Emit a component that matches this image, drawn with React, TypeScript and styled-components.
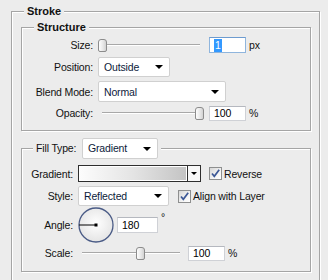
import React from "react";
import styled, { createGlobalStyle } from "styled-components";

const GlobalStyle = createGlobalStyle`
  html, body {
    margin: 0;
    padding: 0;
    background: #ececec;
  }
  body {
    font-family: "Liberation Sans", Arial, sans-serif;
    font-size: 10.5px;
    letter-spacing: -0.15px;
    color: #111;
  }
`;

const Page = styled.div`
  width: 328px;
  height: 280px;
  overflow: hidden;
  box-sizing: border-box;
  padding: 5px 0 0 11px;
`;

const Group = styled.fieldset<{ $width: number; $height?: number }>`
  box-sizing: border-box;
  width: ${(p) => p.$width}px;
  ${(p) => (p.$height ? `height: ${p.$height}px;` : "")}
  min-width: 0;
  margin: 0;
  padding: 0;
  border: 1px solid #a5a5a5;
  box-shadow: 1px 1px 0 #fff, inset 1px 1px 0 #fff;
`;

const Legend = styled.legend<{ $offset?: number }>`
  margin-left: ${(p) => p.$offset ?? 12}px;
  padding: 0 3px;
  line-height: 13px;
  font-size: 11px;
  font-weight: bold;
  letter-spacing: 0;
  background: #ececec;
`;

const OuterBody = styled.div`
  padding: 3px 0 0 9px;
`;

const GroupBody = styled.div<{ $top: number; $bottom: number }>`
  padding: ${(p) => p.$top}px 0 ${(p) => p.$bottom}px 1px;
`;

const Row = styled.div<{ $height: number; $gap?: number }>`
  display: flex;
  align-items: center;
  height: ${(p) => p.$height}px;
  margin-top: ${(p) => p.$gap ?? 0}px;
`;

const Label = styled.span<{ $width: number }>`
  width: ${(p) => p.$width}px;
  margin-right: 5px;
  text-align: right;
  white-space: nowrap;
`;

const LegendRow = styled.div`
  display: flex;
  align-items: center;
  font-size: 10.5px;
  font-weight: normal;
  letter-spacing: -0.15px;
  white-space: nowrap;
`;

const LegendLabel = styled.span`
  width: 41px;
  margin-right: 5px;
`;

const SelectBox = styled.div<{ $width: number; $height: number }>`
  box-sizing: border-box;
  width: ${(p) => p.$width}px;
  height: ${(p) => p.$height}px;
  display: flex;
  align-items: center;
  justify-content: space-between;
  padding: 0 6px 0 5px;
  background: #fff;
  border: 1px solid #d0d0d0;
  border-radius: 2px;
  color: #0c1a3a;
  white-space: nowrap;
`;

const Arrow = styled.span<{ $size?: number }>`
  width: 0;
  height: 0;
  border-left: ${(p) => p.$size ?? 4}px solid transparent;
  border-right: ${(p) => p.$size ?? 4}px solid transparent;
  border-top: ${(p) => p.$size ?? 4}px solid #000;
`;

const TextBox = styled.div<{ $width: number; $height: number; $focused?: boolean; $gap?: number }>`
  box-sizing: border-box;
  width: ${(p) => p.$width}px;
  height: ${(p) => p.$height}px;
  margin-left: ${(p) => p.$gap ?? 0}px;
  display: flex;
  align-items: center;
  padding-left: 4px;
  background: #fff;
  border: 1px solid ${(p) => (p.$focused ? "#8fb5dd" : "#cfd1d6")};
  border-top-color: ${(p) => (p.$focused ? "#6d9bcf" : "#b5b8bf")};
  color: #000;
`;

const Selected = styled.span`
  background: #3399ff;
  color: #fff;
  padding: 0 1px;
  line-height: 13px;
`;

const Unit = styled.span<{ $raised?: boolean }>`
  margin-left: 3px;
  ${(p) => (p.$raised ? "align-self: flex-start; margin-top: 4px;" : "")}
`;

const SliderWrap = styled.div<{ $width: number }>`
  position: relative;
  width: ${(p) => p.$width}px;
  height: 13px;
`;

const Track = styled.div`
  position: absolute;
  left: 4px;
  right: 4px;
  top: 5px;
  height: 1px;
  background: #a8a8a8;
  border-bottom: 1px solid #fff;
`;

const Thumb = styled.div`
  position: absolute;
  top: 0;
  box-sizing: border-box;
  width: 9px;
  height: 13px;
  border: 1px solid #8c8c8c;
  border-radius: 3px 3px 2px 2px;
  background: linear-gradient(to right, #fdfdfd, #e6e6e6 60%, #d2d2d2);
`;

const Slider = ({ width, value }: { width: number; value: number }) => (
  <SliderWrap $width={width}>
    <Track />
    <Thumb style={{ left: Math.round(value * (width - 9)) }} />
  </SliderWrap>
);

const GradientPicker = styled.div`
  box-sizing: border-box;
  width: 123px;
  height: 17px;
  display: flex;
  border: 1px solid #2e2e2e;
  background: #fff;
`;

const GradientPreview = styled.div`
  flex: 1;
  margin: 1px;
  background: linear-gradient(to right, #fcfcfc, #e4e4e4 50%, #c4c4c4);
`;

const GradientButton = styled.div`
  width: 12px;
  display: flex;
  align-items: center;
  justify-content: center;
  border-left: 1px solid #2e2e2e;
  background: #f7f7f7;
`;

const CheckWrap = styled.label<{ $gap: number }>`
  display: flex;
  align-items: center;
  margin-left: ${(p) => p.$gap}px;
  white-space: nowrap;
`;

const CheckBox = styled.span`
  box-sizing: border-box;
  width: 13px;
  height: 13px;
  margin-right: 2px;
  border: 1px solid #8e8f8f;
  background: linear-gradient(135deg, #d6d6d6, #f4f4f4 60%, #fff);
  display: flex;
  align-items: center;
  justify-content: center;
`;

const Check = ({ label, gap }: { label: string; gap: number }) => (
  <CheckWrap $gap={gap}>
    <CheckBox>
      <svg width="11" height="11" viewBox="0 0 11 11">
        <path d="M2 5.5 L4.3 8.3 L9.2 1.8" fill="none" stroke="#3c5896" strokeWidth="1.7" />
      </svg>
    </CheckBox>
    {label}
  </CheckWrap>
);

const Dial = () => (
  <svg width="36" height="36" viewBox="0 0 36 36">
    <defs>
      <radialGradient id="dialFill" cx="50%" cy="45%" r="60%">
        <stop offset="0%" stopColor="#ffffff" />
        <stop offset="100%" stopColor="#e2e2e2" />
      </radialGradient>
    </defs>
    <circle cx="18" cy="18" r="17" fill="url(#dialFill)" stroke="#4a5b86" strokeWidth="1.3" />
    <line x1="1" y1="18" x2="18" y2="18" stroke="#000" strokeWidth="1" />
    <rect x="16.5" y="16.5" width="3" height="3" fill="#000" />
  </svg>
);

export default function App() {
  return (
    <Page>
      <GlobalStyle />
      <Group $width={309} $height={300}>
        <Legend>Stroke</Legend>
        <OuterBody>
          <Group $width={290}>
            <Legend>Structure</Legend>
            <GroupBody $top={3} $bottom={9}>
              <Row $height={16}>
                <Label $width={70}>Size:</Label>
                <Slider width={106} value={0} />
                <TextBox $width={37} $height={16} $gap={5} $focused>
                  <Selected>1</Selected>
                </TextBox>
                <Unit>px</Unit>
              </Row>
              <Row $height={20} $gap={4}>
                <Label $width={70}>Position:</Label>
                <SelectBox $width={72} $height={20}>
                  Outside
                  <Arrow />
                </SelectBox>
              </Row>
              <Row $height={21} $gap={4}>
                <Label $width={70}>Blend Mode:</Label>
                <SelectBox $width={128} $height={21}>
                  Normal
                  <Arrow />
                </SelectBox>
              </Row>
              <Row $height={16} $gap={3}>
                <Label $width={70}>Opacity:</Label>
                <Slider width={106} value={1} />
                <TextBox $width={37} $height={15} $gap={5}>
                  100
                </TextBox>
                <Unit>%</Unit>
              </Row>
            </GroupBody>
          </Group>

          <Group $width={290} style={{ marginTop: 7 }}>
            <Legend $offset={11}>
              <LegendRow>
                <LegendLabel>Fill Type:</LegendLabel>
                <SelectBox $width={76} $height={21}>
                  Gradient
                  <Arrow />
                </SelectBox>
              </LegendRow>
            </Legend>
            <GroupBody $top={6} $bottom={10}>
              <Row $height={17}>
                <Label $width={50}>Gradient:</Label>
                <GradientPicker>
                  <GradientPreview />
                  <GradientButton>
                    <Arrow $size={3} />
                  </GradientButton>
                </GradientPicker>
                <Check label="Reverse" gap={8} />
              </Row>
              <Row $height={20} $gap={4}>
                <Label $width={50}>Style:</Label>
                <SelectBox $width={91} $height={20}>
                  Reflected
                  <Arrow />
                </SelectBox>
                <Check label="Align with Layer" gap={9} />
              </Row>
              <Row $height={36} $gap={1}>
                <Label $width={50}>Angle:</Label>
                <Dial />
                <TextBox $width={41} $height={16} $gap={3}>
                  180
                </TextBox>
                <Unit $raised>°</Unit>
              </Row>
              <Row $height={16} $gap={2}>
                <Label $width={50}>Scale:</Label>
                <Slider width={106} value={0.6} />
                <TextBox $width={37} $height={15} $gap={4}>
                  100
                </TextBox>
                <Unit>%</Unit>
              </Row>
            </GroupBody>
          </Group>
        </OuterBody>
      </Group>
    </Page>
  );
}
